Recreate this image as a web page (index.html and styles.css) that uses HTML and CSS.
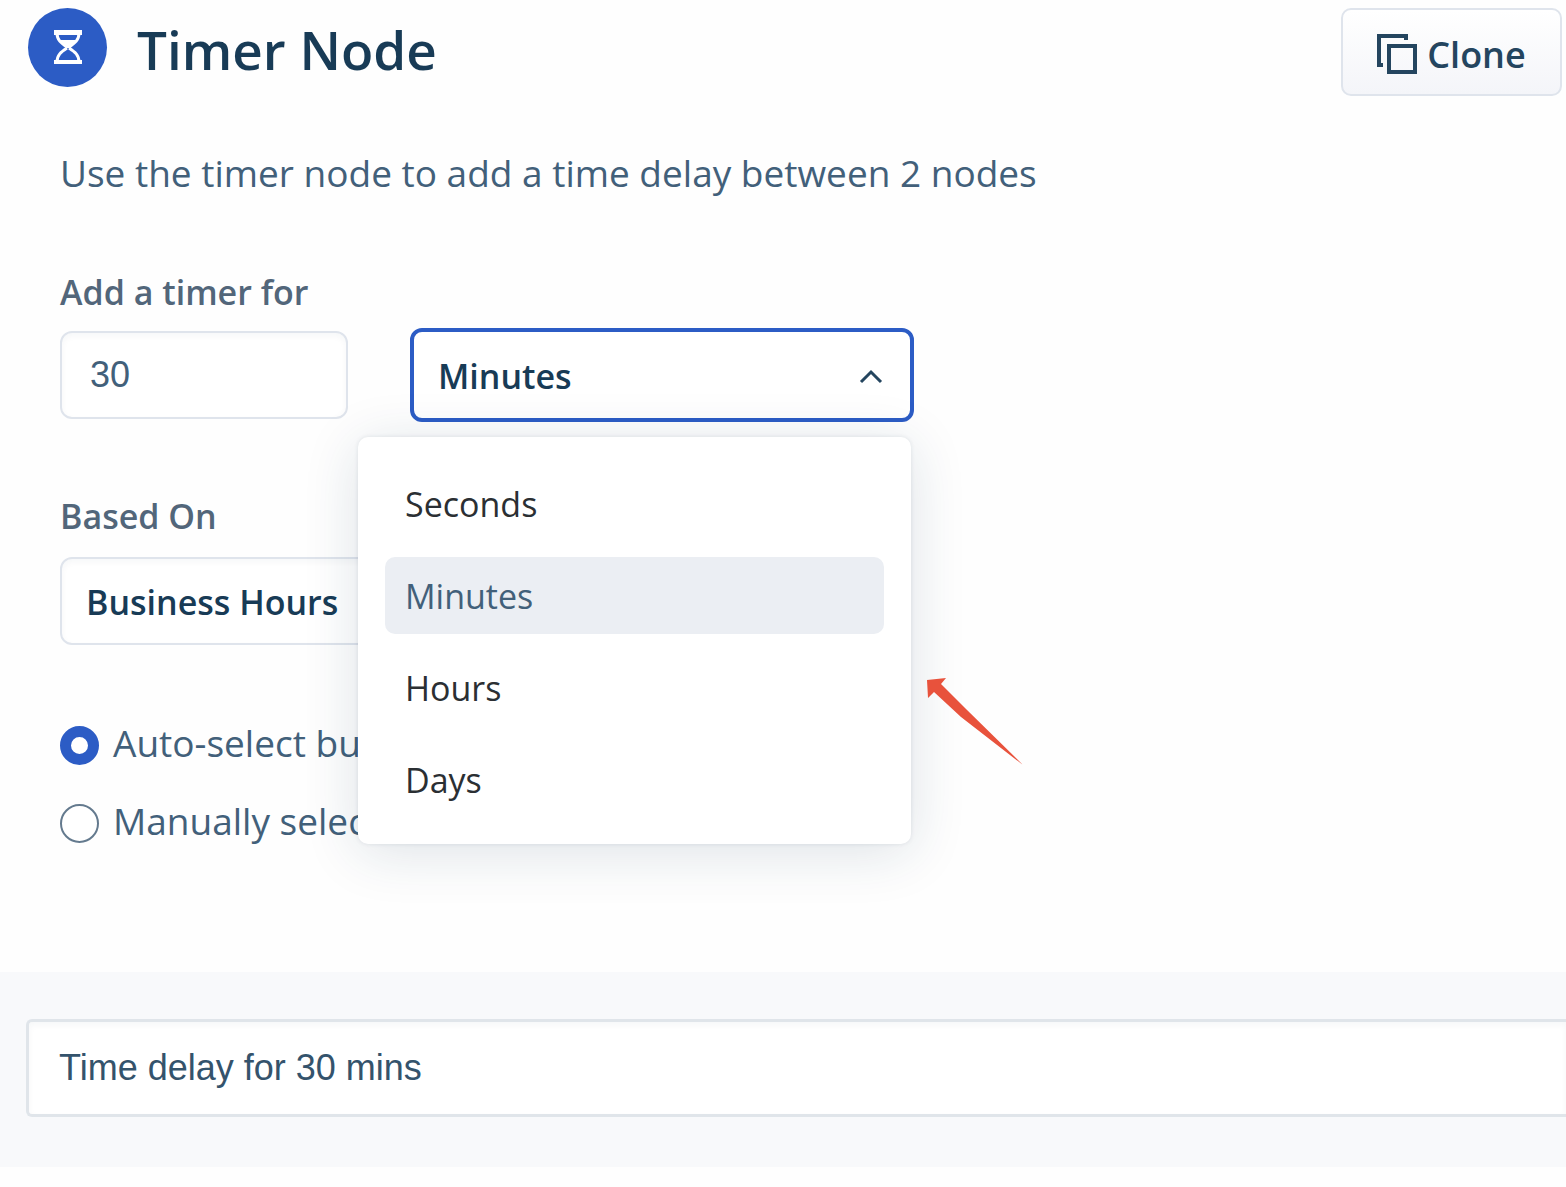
FILE: index.html
```html
<!DOCTYPE html>
<html lang="en">
<head>
<meta charset="utf-8">
<meta name="viewport" content="width=device-width, initial-scale=1">
<title>Timer Node</title>
<link rel="stylesheet" href="styles.css">
</head>
<body>
<main class="panel">
  <header class="panel-header">
    <span class="node-icon">
      <svg width="28" height="36" viewBox="0 0 28 36" aria-hidden="true">
        <path fill="none" stroke="#fff" stroke-width="3" d="M3 3C3 10 7 13 13 17M25 3C25 10 21 13 15 17M3 32C3 25 7 22 13 18M25 32C25 25 21 22 15 18"/>
        <path fill="#fff" d="M0 0H28V5H0zM0 30H28V34H0zM5 10H23L16 18H12z"/>
      </svg>
    </span>
    <h1 class="title">Timer Node</h1>
    <button class="clone" type="button">
      <svg width="40" height="40" viewBox="0 0 40 40" fill="none" stroke="#24455f" stroke-width="4" aria-hidden="true">
        <path d="M29 6V2H2V31H6"/>
        <path d="M12 12H38V38H12z"/>
      </svg>
      Clone
    </button>
  </header>

  <form class="settings">
    <p class="description">Use the timer node to add a time delay between 2 nodes</p>

    <label class="label" for="amount">Add a timer for</label>
    <div class="timer-row">
      <input class="field amount" id="amount" type="text" value="30">
      <div class="dropdown">
        <select class="field select select-open" aria-label="Time unit">
          <option>Seconds</option>
          <option selected>Minutes</option>
          <option>Hours</option>
          <option>Days</option>
        </select>
        <svg class="chevron" width="24" height="16" viewBox="0 0 24 16" fill="none" stroke="#24455f" stroke-width="3" aria-hidden="true">
          <path d="M2 13L12 3L22 13"/>
        </svg>
        <ul class="menu" role="listbox" aria-label="Time unit">
          <li class="option" role="option">Seconds</li>
          <li class="option option-selected" role="option" aria-selected="true">Minutes</li>
          <li class="option" role="option">Hours</li>
          <li class="option" role="option">Days</li>
        </ul>
        <svg class="pointer" width="98" height="88" viewBox="0 0 98 88" aria-hidden="true">
          <path fill="#e8523c" d="M1 2L20 0L15 6L40 31L97 87L35 39L8 14L2 20z"/>
        </svg>
      </div>
    </div>

    <label class="label" for="based-on">Based On</label>
    <select class="field select based-on" id="based-on">
      <option>Business Hours</option>
    </select>

    <div class="choices">
      <label class="choice"><input class="radio" type="radio" name="mode" checked>Auto-select business</label>
      <label class="choice"><input class="radio" type="radio" name="mode">Manually select</label>
    </div>
  </form>

  <footer class="summary">
    <input class="summary-field" type="text" aria-label="Node summary" value="Time delay for 30 mins">
  </footer>
</main>
</body>
</html>
```
FILE: styles.css
```css
* {
  box-sizing: border-box;
}

body {
  margin: 0;
  background: #fefefe;
  color: #183b56;
  font-family: "Open Sans", "Noto Sans", sans-serif;
  overflow-x: hidden;
}

.panel-header {
  display: flex;
  align-items: flex-start;
  padding: 8px 4px 0 28px;
}

.node-icon {
  display: flex;
  align-items: center;
  justify-content: center;
  width: 79px;
  height: 79px;
  border-radius: 50%;
  background: #2c5cc5;
}

.title {
  flex: 1;
  margin: 0 0 0 30px;
  font-size: 53px;
  line-height: 84px;
  font-weight: 600;
}

.clone {
  display: flex;
  align-items: center;
  justify-content: center;
  gap: 10px;
  width: 221px;
  height: 88px;
  padding: 4px 0 0;
  border: 2px solid #dfe4ec;
  border-radius: 10px;
  background: linear-gradient(#fff, #f4f5f9);
  color: #24455f;
  font: 600 36px "Open Sans", "Noto Sans", sans-serif;
}

.settings {
  display: flex;
  flex-direction: column;
  align-items: flex-start;
  padding: 52px 60px 0;
}

.description {
  margin: 0;
  color: #42607a;
  font-size: 37px;
  line-height: 50px;
}

.label {
  margin-top: 71px;
  color: #52667a;
  font-size: 34px;
  line-height: 46px;
  font-weight: 600;
}

.timer-row {
  display: flex;
  align-items: center;
  gap: 62px;
  margin-top: 13px;
}

.field {
  height: 88px;
  border: 2px solid #dfe4ec;
  border-radius: 12px;
  background: #fff;
  box-shadow: inset 0 3px 6px #183b560a;
  color: #183b56;
  outline: none;
}

.amount {
  width: 288px;
  padding: 0 28px;
  color: #42607a;
  font: 36px "Liberation Sans", Arial, sans-serif;
}

.select {
  appearance: none;
  width: 504px;
  padding: 2px 24px 0;
  font: 600 34px "Open Sans", "Noto Sans", sans-serif;
}

.select-open {
  display: block;
  height: 94px;
  border: 4px solid #2c5cc5;
  box-shadow: none;
}

.based-on {
  margin-top: 18px;
}

.dropdown {
  position: relative;
}

.chevron {
  position: absolute;
  top: 41px;
  right: 31px;
}

.menu {
  position: absolute;
  top: 109px;
  right: 3px;
  z-index: 1;
  display: flex;
  flex-direction: column;
  gap: 15px;
  width: 553px;
  margin: 0;
  padding: 28px 27px 26px;
  border-radius: 10px;
  background: #fff;
  box-shadow: 0 0 4px #183b561c, 0 8px 56px #183b5624;
  list-style: none;
}

.option {
  padding: 2px 20px 0;
  border-radius: 10px;
  color: #2b2f33;
  font-size: 34px;
  line-height: 75px;
}

.option-selected {
  background: #ebeef3;
  color: #42607a;
}

.pointer {
  position: absolute;
  top: 350px;
  left: 516px;
  z-index: 2;
}

.choices {
  display: flex;
  flex-direction: column;
  gap: 28px;
  margin-top: 73px;
}

.choice {
  display: flex;
  align-items: center;
  gap: 14px;
  color: #42607a;
  font-size: 37px;
  line-height: 50px;
}

.radio {
  appearance: none;
  width: 39px;
  height: 39px;
  margin: 4px 0 0;
  border: 2px solid #647a8e;
  border-radius: 50%;
  background: #fff;
}

.radio:checked {
  border: 11px solid #2c5cc5;
}

.summary {
  margin: 126px 0 21px;
  padding: 47px 0 50px 26px;
  background: #f8f9fb;
}

.summary-field {
  display: block;
  width: 100%;
  height: 98px;
  padding: 0 30px;
  border: 3px solid #e0e5ea;
  border-right: 0;
  border-radius: 6px 0 0 6px;
  background: #fff;
  box-shadow: inset 0 3px 6px #183b560a;
  color: #34536c;
  font: 36px "Liberation Sans", Arial, sans-serif;
}
```
